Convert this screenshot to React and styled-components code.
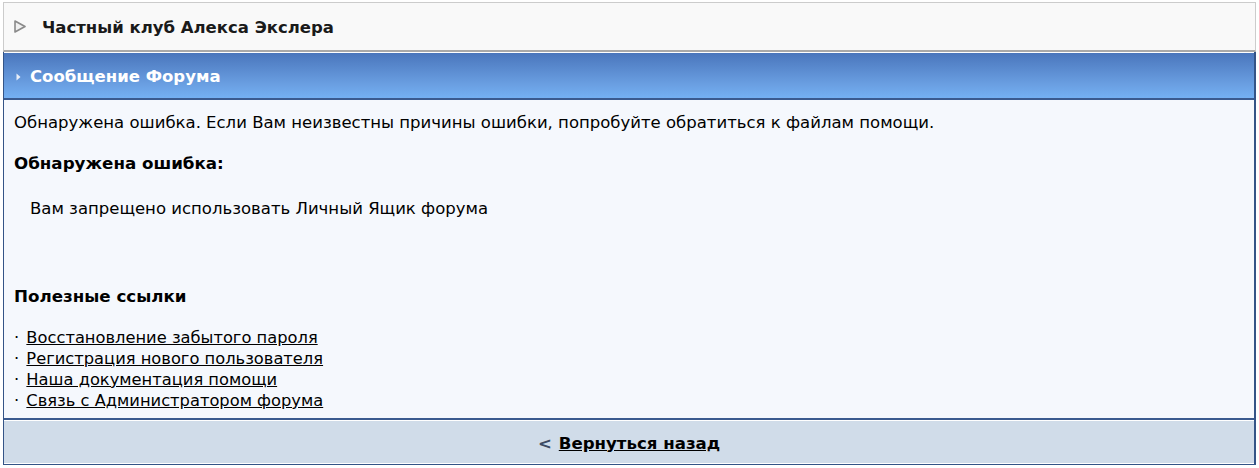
import React from "react";
import styled, { createGlobalStyle } from "styled-components";

const Global = createGlobalStyle`
  body {
    margin: 0;
    padding: 2px 3px;
    background: #ffffff;
    font-family: "DejaVu Sans", Verdana, sans-serif;
    font-size: 16.5px;
    color: #000;
  }
`;

const TopBar = styled.div`
  display: flex;
  align-items: center;
  gap: 16px;
  height: 47px;
  padding-left: 10px;
  background: #f9f9f9;
  border: 1px solid #cccccc;
  border-bottom: 2px solid #a9a9a9;
`;

const TopTitle = styled.div`
  font-weight: bold;
  font-size: 16.5px;
  color: #1a1a1a;
  padding-top: 2px;
`;

const Panel = styled.div`
  border-left: 1px solid #345487;
  border-right: 2px solid #345487;
  border-bottom: 1px solid #345487;
`;

const PanelHeader = styled.div`
  display: flex;
  align-items: center;
  gap: 9px;
  height: 43px;
  padding: 2px 0 0 12px;
  border-top: 1px solid #ffffff;
  border-bottom: 2px solid #3a5a8f;
  background: linear-gradient(#4a76bc, #6a9fe2 70%, #74b0f3);
  color: #ffffff;
  font-weight: bold;
  font-size: 16.5px;
`;

const Body = styled.div`
  background: #f5f8fd;
  padding: 14px 10px 7px 10px;
  border-bottom: 2px solid #3a5a8f;
`;

const Para = styled.p`
  margin: 0;
  line-height: 18px;
`;

const Heading = styled.p`
  margin: ${({ $top }) => $top || "22px"} 0 0 0;
  font-weight: bold;
  font-size: 16.7px;
  line-height: 18px;
`;

const Message = styled.p`
  margin: 28px 0 0 16px;
  line-height: 18px;
`;

const Links = styled.ul`
  list-style: none;
  margin: 22px 0 0 0;
  padding: 0;
`;

const LinkItem = styled.li`
  line-height: 21px;
  font-size: 16.3px;

  a {
    margin-left: 2px;
    color: #000;
    text-decoration: underline;
  }
`;

const Footer = styled.div`
  display: flex;
  justify-content: center;
  align-items: center;
  height: 40px;
  padding-top: 2px;
  background: #d0dce9;
  border-top: 1px solid #ffffff;
  border-bottom: 1px solid #ffffff;
  font-weight: bold;
  font-size: 16.6px;
  gap: 7px;

  span {
    color: #3b4a63;
  }

  a {
    color: #000;
    text-decoration: underline;
  }
`;

const TopArrow = () => (
  <svg width="12" height="13" viewBox="0 0 12 13">
    <path d="M1 1 L11 6.5 L1 12 Z" fill="#f0f0f0" stroke="#8a8a8a" strokeWidth="1.6" strokeLinejoin="round" />
  </svg>
);

const HeadArrow = () => (
  <svg width="5" height="8" viewBox="0 0 5 8">
    <path d="M0.5 0.5 L4.5 4 L0.5 7.5 Z" fill="#e8eef8" />
  </svg>
);

const links = [
  "Восстановление забытого пароля",
  "Регистрация нового пользователя",
  "Наша документация помощи",
  "Связь с Администратором форума",
];

export default function App() {
  return (
    <>
      <Global />
      <TopBar>
        <TopArrow />
        <TopTitle>Частный клуб Алекса Экслера</TopTitle>
      </TopBar>
      <Panel>
        <PanelHeader>
          <HeadArrow />
          Сообщение Форума
        </PanelHeader>
        <Body>
          <Para>
            Обнаружена ошибка. Если Вам неизвестны причины ошибки, попробуйте обратиться к файлам помощи.
          </Para>
          <Heading>Обнаружена ошибка:</Heading>
          <Message>Вам запрещено использовать Личный Ящик форума</Message>
          <Heading $top="69px">Полезные ссылки</Heading>
          <Links>
            {links.map((l) => (
              <LinkItem key={l}>
                · <a href="#">{l}</a>
              </LinkItem>
            ))}
          </Links>
        </Body>
        <Footer>
          <span>&lt;</span>
          <a href="#">Вернуться назад</a>
        </Footer>
      </Panel>
    </>
  );
}
